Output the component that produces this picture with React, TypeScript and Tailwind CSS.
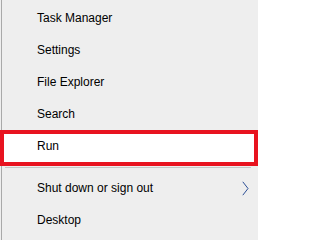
import type { ReactNode } from 'react'

const topItems = ['Task Manager', 'Settings', 'File Explorer', 'Search']

function Row({ label, children }: { label: string; children?: ReactNode }) {
  return (
    <div className="flex h-8 items-center justify-between pl-[35px] pr-[8px]">
      <span>{label}</span>
      {children}
    </div>
  )
}

export default function App() {
  return (
    <div
      className="relative h-[240px] w-[258px] overflow-hidden bg-[#eeeeee] pl-px text-[12px] text-black"
      style={{ fontFamily: '"Liberation Sans", Arial, sans-serif' }}
    >
      <div className="flex h-full flex-col border-l border-[#a9a9a9] pt-[2px]">
        {topItems.map(item => (
          <Row key={item} label={item} />
        ))}

        {/* highlighted item */}
        <div className="bg-white">
          <Row label="Run" />
        </div>

        {/* separator */}
        <div className="flex h-[10px] items-center pl-[3px] pr-[7px]">
          <div className="h-px w-full bg-[#c6c6c6]" />
        </div>

        <Row label="Shut down or sign out">
          <svg width="7" height="15" viewBox="0 0 7 15" className="mr-px">
            <path d="M0.8 0.8 L6 7.5 L0.8 14.2" fill="none" stroke="#2c4f96" strokeWidth="1" />
          </svg>
        </Row>
        <Row label="Desktop" />
      </div>

      {/* red annotation box round Run */}
      <div className="absolute left-0 top-[130px] h-[36px] w-[258px] border-4 border-[#e8131f]" />
    </div>
  )
}
